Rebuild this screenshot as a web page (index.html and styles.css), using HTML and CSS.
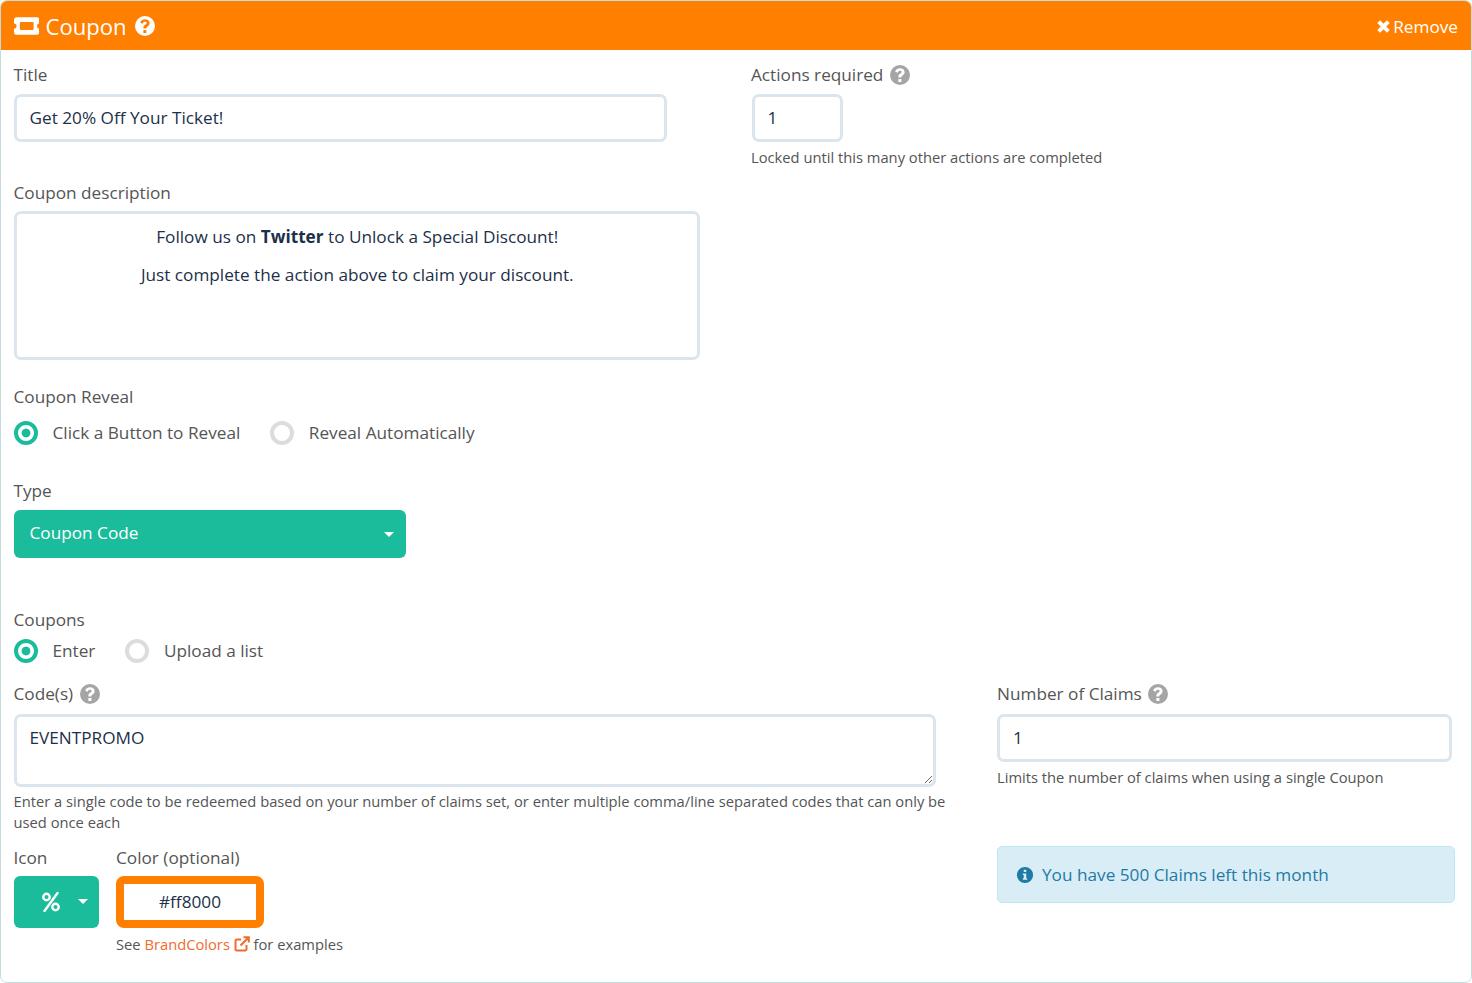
FILE: index.html
```html
<!DOCTYPE html>
<html lang="en">
<head>
<meta charset="utf-8">
<title>Coupon</title>
<link rel="stylesheet" href="styles.css">
</head>
<body>
<section class="panel">
  <header class="panel-head">
    <div class="head-title">
      <svg class="ticket" viewBox="0 0 26 18"><path fill="#fff" fill-rule="evenodd" d="M3 0h20a3 3 0 0 1 3 3v3.400a2.600 2.600 0 0 0 0 5.200V15a3 3 0 0 1-3 3H3a3 3 0 0 1-3-3v-3.400a2.600 2.600 0 0 0 0-5.200V3a3 3 0 0 1 3-3zM7 5a1 1 0 0 0-1 1v6a1 1 0 0 0 1 1h12a1 1 0 0 0 1-1V6a1 1 0 0 0-1-1z"/></svg>
      <span>Coupon</span>
      <svg class="q-head" viewBox="0 0 20 20"><use href="#qmark"/></svg>
    </div>
    <a class="remove"><svg viewBox="0 0 14 14" class="x"><path d="M2.500 2.500l9 9m0-9l-9 9" stroke="#fff" stroke-width="3.600" fill="none"/></svg>Remove</a>
  </header>

  <svg class="defs" width="0" height="0"><defs><symbol id="qmark" viewBox="0 0 20 20"><path fill="currentColor" fill-rule="evenodd" d="M10 0a10 10 0 1 1 0 20a10 10 0 0 1 0-20zM8.400 14v3h3v-3zM10 3.200c-2.600 0-4.300 1.300-4.800 3.500l2.600 1c.3-1.200 1-1.900 2.100-1.900 1 0 1.700.5 1.700 1.300 0 .7-.5 1.100-1.500 1.700-1.200.7-1.700 1.500-1.700 2.800v.9h3v-.6c0-.6.300-.9 1.200-1.500 1.300-.8 2-1.800 2-3.200 0-2.400-1.900-4-4.600-4z"/></symbol></defs></svg>

  <div class="panel-body">
    <div class="row-top">
      <div class="col-title">
        <label class="lbl">Title</label>
        <input class="field field-title" value="Get 20% Off Your Ticket!">
      </div>
      <div class="col-actions">
        <label class="lbl">Actions required <svg class="q"><use href="#qmark"/></svg></label>
        <input class="field field-actions" value="1">
        <p class="help">Locked until this many other actions are completed</p>
      </div>
    </div>

    <label class="lbl lbl-desc">Coupon description</label>
    <div class="editor">
      <p>Follow us on <strong>Twitter</strong> to Unlock a Special Discount!</p>
      <p>Just complete the action above to claim your discount.</p>
    </div>

    <label class="lbl lbl-reveal">Coupon Reveal</label>
    <div class="radios">
      <span class="radio on"></span><span class="radio-text">Click a Button to Reveal</span>
      <span class="radio"></span><span class="radio-text">Reveal Automatically</span>
    </div>

    <label class="lbl lbl-type">Type</label>
    <div class="select"><span>Coupon Code</span><i class="caret"></i></div>

    <label class="lbl lbl-coupons">Coupons</label>
    <div class="radios radios-tight">
      <span class="radio on"></span><span class="radio-text">Enter</span>
      <span class="radio"></span><span class="radio-text">Upload a list</span>
    </div>

    <div class="row-codes">
      <div class="col-codes">
        <label class="lbl">Code(s) <svg class="q"><use href="#qmark"/></svg></label>
        <textarea class="field area">EVENTPROMO</textarea>
        <p class="help help-codes">Enter a single code to be redeemed based on your number of claims set, or enter multiple comma/line separated codes that can only be used once each</p>
        <div class="row-style">
          <div>
            <label class="lbl">Icon</label>
            <div class="icon-btn">
              <svg class="pct" viewBox="0 0 18 20"><circle cx="4.500" cy="5" r="3.200" fill="none" stroke="#fff" stroke-width="2.400"/><circle cx="13.500" cy="15" r="3.200" fill="none" stroke="#fff" stroke-width="2.400"/><path d="M15.500 1L2.500 19" stroke="#fff" stroke-width="2.400" stroke-linecap="round"/></svg>
              <i class="caret"></i>
            </div>
          </div>
          <div>
            <label class="lbl">Color (optional)</label>
            <input class="field color" value="#ff8000">
            <p class="help help-color">See <a class="link">BrandColors <svg class="ext" viewBox="0 0 16 16"><path d="M12.500 9v4.200a1.300 1.300 0 0 1-1.300 1.300H2.800a1.300 1.300 0 0 1-1.300-1.300V4.800a1.300 1.300 0 0 1 1.300-1.300H7" fill="none" stroke="#f26a2e" stroke-width="2"/><path d="M6.500 9.500L14 2M9.500 1.200h5.300v5.300" fill="none" stroke="#f26a2e" stroke-width="2"/></svg></a> for examples</p>
          </div>
        </div>
      </div>
      <div class="col-claims">
        <label class="lbl">Number of Claims <svg class="q"><use href="#qmark"/></svg></label>
        <input class="field field-claims" value="1">
        <p class="help">Limits the number of claims when using a single Coupon</p>
        <div class="alert">
          <svg class="info" viewBox="0 0 20 20"><path fill="#1f7aa5" fill-rule="evenodd" d="M10 1a9 9 0 1 1 0 18a9 9 0 0 1 0-18zM8.600 4.200v2.600h2.800V4.200zM7.600 8.400v1.700h1v3.400h-1v1.700h4.800v-1.700h-1V8.400z"/></svg>
          <span>You have 500 Claims left this month</span>
        </div>
      </div>
    </div>
  </div>
</section>
</body>
</html>
```
FILE: styles.css
```css
* { box-sizing: border-box; }
html, body { margin: 0; padding: 0; background: #fff; }
body { font-family: "Open Sans", "Liberation Sans", sans-serif; color: #1d3049; }
.defs { display: block; height: 0; }

.panel {
  width: 1472px;
  height: 983px;
  border: 1.500px solid #c5dcdc;
  border-radius: 7px;
  overflow: hidden;
  background: #fff;
}
.panel-head {
  height: 49px;
  background: #ff8000;
  display: flex;
  align-items: center;
  justify-content: space-between;
  padding: 2px 13px 1px 12.500px;
  color: #fff;
}
.head-title { display: flex; align-items: center; font-size: 22.100px; }
.ticket { width: 25.500px; height: 18px; margin-right: 6.500px; }
.q-head { width: 20px; height: 20px; margin-left: 8px; color: #fff; }
.remove { display: flex; align-items: center; font-size: 17.200px; color: #fff; }
.x { width: 15px; height: 15px; margin-right: 2.500px; }

.panel-body { padding: 0 16px 0 12.500px; }
.lbl { display: block; font-size: 17.200px; line-height: 24px; color: #555; }
.q { width: 20px; height: 20px; color: #a5a5a5; vertical-align: -3.500px; margin-left: 2px; }

.field {
  display: block;
  font-family: inherit;
  font-size: 17.200px;
  color: #1d3049;
  height: 48px;
  padding: 0 13px 2px;
  background: #fff;
  border: 3px solid #dbe5ed;
  border-radius: 7px;
  outline: none;
}
.help { margin: 0; font-size: 14.720px; line-height: 21px; color: #555; }

.row-top { display: flex; padding-top: 13px; height: 130px; }
.col-title { width: 737.500px; }
.field-title { width: 653px; margin-top: 7px; }
.col-actions .field-actions { width: 91px; margin: 7px 0 0 .5px; }
.col-actions .help { margin-top: 5px; }

.lbl-desc { margin-top: 1px; }
.editor {
  width: 686px;
  height: 148.500px;
  margin-top: 6px;
  padding: 10.500px 13px 10px 14.500px;
  border: 3px solid #dbe5ed;
  border-radius: 7px;
  text-align: center;
  font-size: 17.200px;
  line-height: 24px;
}
.editor p { margin: 0 0 14px; }

.lbl-reveal { margin-top: 25.500px; }
.radios { display: flex; height: 24px; margin-top: 12px; }
.radio {
  width: 24px;
  height: 24px;
  border-radius: 50%;
  border: 4px solid #dcdcdc;
  background: #fff;
  flex: none;
}
.radio.on {
  border-color: #1abc9c;
  background: radial-gradient(circle, #1abc9c 0 4px, #fff 4.800px);
}
.radio-text { font-size: 17.200px; line-height: 24px; color: #555; margin: 0 29.500px 0 15px; }

.lbl-type { margin-top: 34px; }
.select {
  width: 392px;
  height: 48px;
  margin-top: 7px;
  padding: 0 12px 4px 16px;
  background: #1abc9c;
  border-radius: 6px;
  color: #fff;
  font-size: 17.200px;
  display: flex;
  align-items: center;
  justify-content: space-between;
}
.select .caret { margin-top: 4px; }
.caret {
  display: block;
  width: 0;
  height: 0;
  border: 5px solid transparent;
  border-top-color: #fff;
  border-bottom-width: 0;
}

.lbl-coupons { margin-top: 50px; }
.radios-tight { margin-top: 7px; }

.row-codes { display: flex; margin-top: 19px; }
.col-codes { width: 984px; }
.col-codes .help-codes { margin-top: 3.500px; width: 950px; }
.area {
  width: 922px;
  height: 73px;
  margin-top: 8px;
  padding: 8.500px 13px;
  line-height: 24px;
  resize: vertical;
}
.row-style { display: flex; gap: 17.500px; margin-top: 13px; }
.icon-btn {
  width: 85px;
  height: 52px;
  margin-top: 6px;
  background: #1abc9c;
  border-radius: 6px;
  display: flex;
  align-items: center;
  justify-content: flex-end;
  padding-right: 11px;
}
.pct { width: 18px; height: 20px; margin-right: 18px; }
.color {
  width: 148px;
  height: 52px;
  margin-top: 6px;
  border: 8px solid #ff8000;
  border-radius: 8px;
  text-align: center;
  padding: 0;
}
.help-color { margin-top: 6px; }
.link { color: #f26a2e; }
.ext { width: 16px; height: 16px; vertical-align: -2px; }

.col-claims { width: 458px; }
.field-claims { width: 455px; margin-top: 8px; }
.col-claims .help { margin-top: 5px; }
.alert {
  display: flex;
  align-items: center;
  width: 458px;
  height: 57px;
  margin-top: 58px;
  padding-left: 18px;
  background: #d9edf7;
  border: 1px solid #bce8f1;
  border-radius: 5px;
  color: #1f7aa5;
  font-size: 17.200px;
}
.info { width: 18px; height: 18px; margin-right: 8px; }
```
